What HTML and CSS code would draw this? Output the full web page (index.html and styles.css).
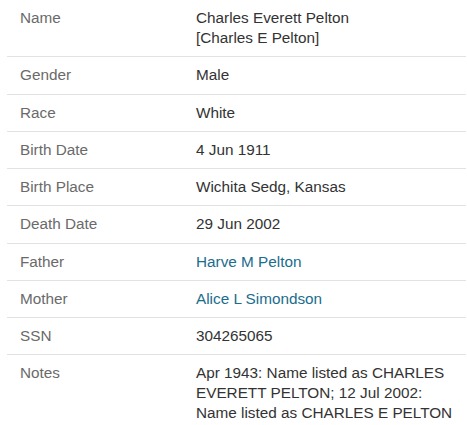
FILE: index.html
```html
<!DOCTYPE html>
<html lang="en">
<head>
<meta charset="utf-8">
<title>Charles Everett Pelton</title>
<link rel="stylesheet" href="styles.css">
</head>
<body>
<div class="facts">
  <div class="row"><div class="label">Name</div><div class="value">Charles Everett Pelton<br>[Charles E Pelton]</div></div>
  <div class="row"><div class="label">Gender</div><div class="value">Male</div></div>
  <div class="row"><div class="label">Race</div><div class="value">White</div></div>
  <div class="row"><div class="label">Birth Date</div><div class="value">4 Jun 1911</div></div>
  <div class="row"><div class="label">Birth Place</div><div class="value">Wichita Sedg, Kansas</div></div>
  <div class="row"><div class="label">Death Date</div><div class="value">29 Jun 2002</div></div>
  <div class="row"><div class="label">Father</div><div class="value"><a class="link" href="#">Harve M Pelton</a></div></div>
  <div class="row"><div class="label">Mother</div><div class="value"><a class="link" href="#">Alice L Simondson</a></div></div>
  <div class="row"><div class="label">SSN</div><div class="value">304265065</div></div>
  <div class="row last"><div class="label">Notes</div><div class="value">Apr 1943: Name listed as CHARLES EVERETT PELTON; 12 Jul 2002: Name listed as CHARLES E PELTON</div></div>
</div>
</body>
</html>
```
FILE: styles.css
```css
html, body {
  margin: 0;
  padding: 0;
  background: #ffffff;
}
body {
  font-family: "Liberation Sans", Arial, sans-serif;
  font-size: 15.3px;
  line-height: 20px;
  color: #333333;
}
.facts {
  margin-left: 7px;
  width: 459px;
}
.row {
  display: grid;
  grid-template-columns: 176px 1fr;
  padding: 8px 0 8.25px 13px;
  border-bottom: 1px solid #e2e2e2;
}
.row.last {
  border-bottom: none;
}
.label {
  color: #6a6a6a;
}
.value {
  color: #333333;
  padding-right: 8px;
}
.link {
  color: #1b6d8c;
  text-decoration: none;
}
```
